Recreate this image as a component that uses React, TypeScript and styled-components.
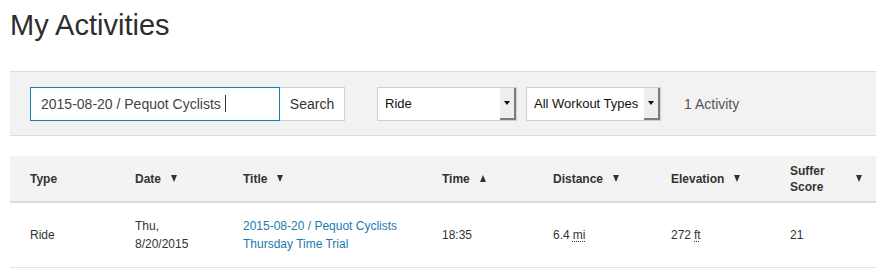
import React from 'react';
import styled, { createGlobalStyle, css } from 'styled-components';

const GlobalStyle = createGlobalStyle`
	body {
		margin: 0;
		background: #fff;
		font-family: 'Liberation Sans', Arial, sans-serif;
		color: #333;
	}
`;

const Page = styled.div`
	padding: 0 0 0 10px;
`;

const Heading = styled.h1`
	margin: 0;
	padding: 7px 0 0 0;
	height: 71px;
	box-sizing: border-box;
	font-size: 29px;
	font-weight: 400;
	line-height: 36px;
	color: #2d2d2d;
`;

const FilterBar = styled.div`
	display: flex;
	align-items: center;
	height: 63px;
	padding: 0 0 0 20px;
	background-color: #f2f2f2;
	border-top: 1px solid #dcdcdc;
	border-bottom: 1px solid #dcdcdc;
`;

const SearchBox = styled.div`
	display: flex;
	height: 34px;
	margin-right: 32px;
`;

const SearchField = styled.div`
	display: flex;
	align-items: center;
	width: 250px;
	height: 34px;
	box-sizing: border-box;
	padding-left: 10px;
	background: #fff;
	border: 1px solid #1a7fb0;
	font-size: 14px;
	color: #444;
`;

const Caret = styled.span`
	display: inline-block;
	width: 1px;
	height: 17px;
	margin-left: 4px;
	background: #333;
`;

const SearchButton = styled.button`
	width: 65px;
	height: 34px;
	padding: 0;
	background: #fff;
	border: 1px solid #cfcfcf;
	border-left: none;
	font-family: inherit;
	font-size: 14px;
	color: #333;
`;

const Select = styled.div<{ $width: number }>`
	display: flex;
	align-items: stretch;
	width: ${({ $width }) => $width}px;
	height: 34px;
	box-sizing: border-box;
	margin-right: 9px;
	background: #fff;
	border: 1px solid #cfcfcf;
	font-size: 13px;
	color: #111;
`;

const SelectLabel = styled.span`
	flex: 1;
	display: flex;
	align-items: center;
	padding-left: 7px;
`;

const SelectArrow = styled.span`
	display: flex;
	align-items: center;
	justify-content: center;
	width: 14px;
	background: #eee;
	border-right: 2px solid #7d7d7d;
	border-bottom: 2px solid #7d7d7d;

	&::after {
		content: '';
		border-left: 3px solid transparent;
		border-right: 3px solid transparent;
		border-top: 4px solid #111;
	}
`;

const Count = styled.span`
	margin-left: 14px;
	font-size: 14px;
	color: #555;
`;

const Table = styled.div`
	margin-top: 20px;
`;

const columns = css`
	display: grid;
	grid-template-columns: 125px 108px 199px 111px 118px 119px 1fr;
	align-items: center;
`;

const HeaderRow = styled.div`
	${columns}
	height: 45px;
	background-color: #f3f3f3;
	border-bottom: 2px solid #dadada;
	font-size: 12px;
	font-weight: 700;
	color: #333;
`;

const BodyRow = styled.div`
	${columns}
	height: 64px;
	border-bottom: 1px solid #e3e3e3;
	font-size: 12px;
	line-height: 18px;
	color: #333;
`;

const HeadCell = styled.div<{ $first?: boolean }>`
	display: flex;
	align-items: center;
	padding-left: ${({ $first }) => ($first ? '20px' : '0')};
	line-height: 16px;
`;

const SortIcon = styled.span<{ $up?: boolean; $far?: boolean }>`
	display: inline-block;
	margin-left: ${({ $far }) => ($far ? 'auto' : '10px')};
	margin-right: ${({ $far }) => ($far ? '14px' : '0')};
	border-left: 3.5px solid transparent;
	border-right: 3.5px solid transparent;
	${({ $up }) =>
		$up
			? css`
					border-bottom: 7px solid #333;
			  `
			: css`
					border-top: 7px solid #333;
			  `}
`;

const Cell = styled.div<{ $first?: boolean }>`
	padding-left: ${({ $first }) => ($first ? '20px' : '0')};
`;

const Link = styled.a`
	color: #1a7bb0;
	text-decoration: none;
`;

const Unit = styled.abbr`
	margin-left: 3px;
	text-decoration: underline dotted;
	text-underline-offset: 2px;
`;

function App(): JSX.Element {
	return (
		<Page>
			<GlobalStyle />
			<Heading>My Activities</Heading>
			<FilterBar>
				<SearchBox>
					<SearchField>
						2015-08-20 / Pequot Cyclists
						<Caret />
					</SearchField>
					<SearchButton>Search</SearchButton>
				</SearchBox>
				<Select $width={140}>
					<SelectLabel>Ride</SelectLabel>
					<SelectArrow />
				</Select>
				<Select $width={135}>
					<SelectLabel>All Workout Types</SelectLabel>
					<SelectArrow />
				</Select>
				<Count>1 Activity</Count>
			</FilterBar>
			<Table>
				<HeaderRow>
					<HeadCell $first>Type</HeadCell>
					<HeadCell>
						Date <SortIcon />
					</HeadCell>
					<HeadCell>
						Title <SortIcon />
					</HeadCell>
					<HeadCell>
						Time <SortIcon $up />
					</HeadCell>
					<HeadCell>
						Distance <SortIcon />
					</HeadCell>
					<HeadCell>
						Elevation <SortIcon />
					</HeadCell>
					<HeadCell>
						<span>
							Suffer
							<br />
							Score
						</span>
						<SortIcon $far />
					</HeadCell>
				</HeaderRow>
				<BodyRow>
					<Cell $first>Ride</Cell>
					<Cell>
						Thu,
						<br />
						8/20/2015
					</Cell>
					<Cell>
						<Link href="#">
							2015-08-20 / Pequot Cyclists
							<br />
							Thursday Time Trial
						</Link>
					</Cell>
					<Cell>18:35</Cell>
					<Cell>
						6.4<Unit title="miles">mi</Unit>
					</Cell>
					<Cell>
						272<Unit title="feet">ft</Unit>
					</Cell>
					<Cell>21</Cell>
				</BodyRow>
			</Table>
		</Page>
	);
}

export default App;
